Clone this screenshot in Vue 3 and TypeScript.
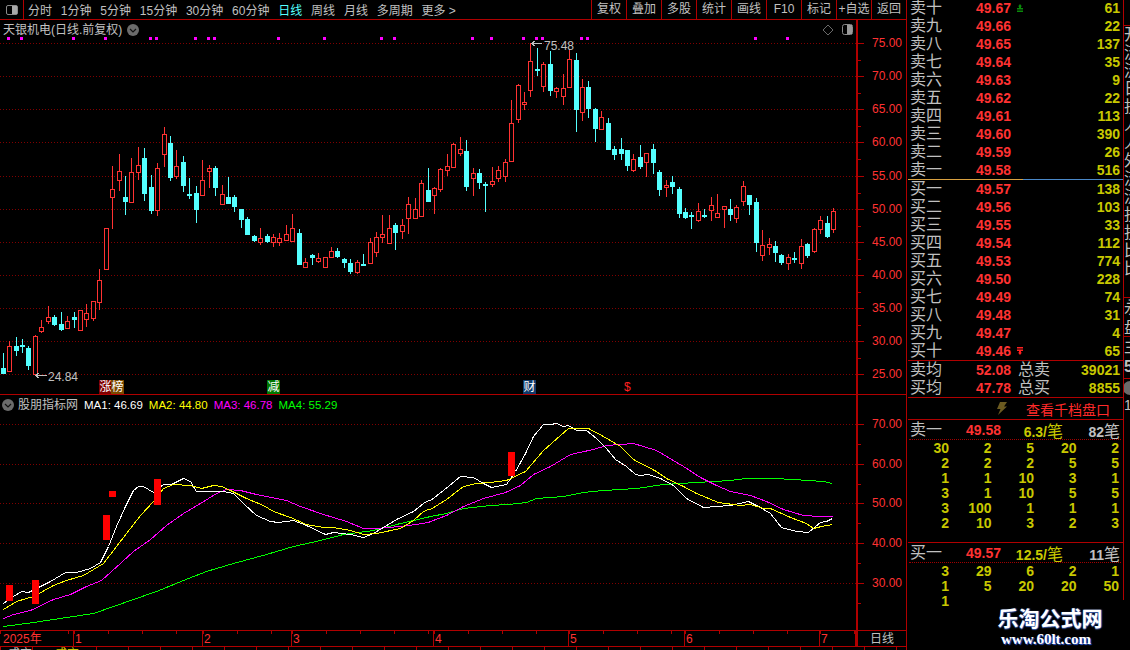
<template>
  <div class="app">
    <div class="left">
      <!-- 顶部周期工具栏 -->
      <div class="toolbar">
        <div class="toggle-cell">
          <svg width="14" height="12" viewBox="0 0 14 12">
            <rect x="1.5" y="1.5" width="11" height="9" rx="1.5" fill="none" stroke="#8a8a8a" />
            <rect x="7" y="2" width="5" height="8" fill="#a8a8a8" />
          </svg>
        </div>
        <div class="periods">
          <span v-for="p in periods" :key="p" class="period" :class="{ active: p === '日线' }">{{ p }}</span>
        </div>
        <div class="tools">
          <span v-for="t in tools" :key="t" class="tool">{{ t }}</span>
        </div>
      </div>

      <!-- K线主图 -->
      <div class="pane upper">
        <svg class="chart" width="906" height="374" viewBox="0 20 906 374">
          <line v-for="g in upperAxis" :key="g.y" class="grid" x1="0" x2="856" :y1="g.y + 0.5" :y2="g.y + 0.5" />
          <rect v-for="x in signalDots" :key="x" :x="x" y="37" width="3" height="3" fill="#ff00ff" />

          <g v-for="(c, i) in candles" :key="i">
            <rect :x="c.x" :y="c.wickTop" width="1" :height="c.wickH" :fill="c.up ? '#ff3232' : '#54ffff'" />
            <rect v-if="c.up" :x="c.x - 1.5" :y="c.top + 0.5" width="4" :height="c.h - 1" fill="#000" stroke="#ff3232" />
            <rect v-else :x="c.x - 2" :y="c.top" width="5" :height="c.h" fill="#54ffff" />
          </g>

          <!-- 最高最低价标注 -->
          <path class="mark" d="M531.5 43.5H542M531.5 43.5l4-3M531.5 43.5l4 3" />
          <text class="mark-text" x="544" y="50">75.48</text>
          <path class="mark" d="M35.5 375.5H47M35.5 375.5l4-3M35.5 375.5l4 3" />
          <text class="mark-text" x="48" y="381">24.84</text>

          <g v-for="t in tags" :key="t.x">
            <rect :x="t.x" y="380" width="13" height="14" :fill="t.bg" />
            <text class="tag-text" :x="t.x + 0.5" y="391">{{ t.text }}</text>
          </g>
          <text class="tag-sign" x="624" y="391">$</text>

          <rect x="856" y="20" width="2" height="374" fill="#b00000" />
          <g v-for="g in upperAxis" :key="'a' + g.y">
            <line class="tick" x1="858" x2="864" :y1="g.y + 0.5" :y2="g.y + 0.5" />
            <text class="axis-text" x="902" :y="g.y + 4">{{ g.label }}</text>
          </g>
          <line v-for="y in upperMinor" :key="y" class="tick" x1="858" x2="861" :y1="y" :y2="y" />

          <path d="M828 25l5 5-5 5-5-5z" fill="none" stroke="#6a6a6a" />
          <rect x="842.5" y="24.500" width="10" height="10" rx="2" fill="none" stroke="#8a8a8a" />
          <rect x="847" y="25" width="5" height="9" fill="#9a9a9a" />
        </svg>
        <div class="pane-title">
          <span>天银机电(日线.前复权)</span>
          <svg width="12" height="12" viewBox="0 0 12 12">
            <circle cx="6" cy="6" r="6" fill="#6b6b6b" />
            <path d="M3 5l3 3 3-3" fill="none" stroke="#111" stroke-width="1.2" />
          </svg>
        </div>
      </div>

      <!-- 副图指标 -->
      <div class="pane lower">
        <svg class="chart" width="906" height="235" viewBox="0 395 906 235">
          <line v-for="g in lowerAxis" :key="g.y" class="grid" x1="0" x2="856" :y1="g.y + 0.5" :y2="g.y + 0.5" />
          <polyline v-for="l in maLines" :key="l.color" class="ma" :points="l.points" :stroke="l.color" />
          <rect v-for="(b, i) in redBars" :key="i" :x="b[0]" :y="b[1]" :width="b[2]" :height="b[3]" fill="#ff0000" />

          <rect x="856" y="395" width="2" height="235" fill="#b00000" />
          <g v-for="g in lowerAxis" :key="'a' + g.y">
            <line class="tick" x1="858" x2="864" :y1="g.y + 0.5" :y2="g.y + 0.5" />
            <text class="axis-text" x="902" :y="g.y + 4">{{ g.label }}</text>
          </g>
          <line v-for="y in lowerMinor" :key="y" class="tick" x1="858" x2="861" :y1="y" :y2="y" />
        </svg>
        <div class="pane-title legend">
          <svg width="12" height="12" viewBox="0 0 12 12">
            <circle cx="6" cy="6" r="6" fill="#6b6b6b" />
            <path d="M3 5l3 3 3-3" fill="none" stroke="#111" stroke-width="1.2" />
          </svg>
          <span class="legend-name">股朋指标网</span>
          <span v-for="m in legend" :key="m.text" class="legend-item" :style="{ color: m.color }">{{ m.text }}</span>
        </div>
      </div>

      <!-- 时间轴 -->
      <div class="time-axis">
        <div class="months">
          <span v-for="m in months" :key="m.label" class="month" :style="{ width: m.width + 'px' }">{{ m.label }}</span>
        </div>
        <div class="axis-name">日线</div>
      </div>
      <div class="strip">
        <span style="width: 47px">成交</span>
        <span class="yellow" style="width: 38px">成交</span>
        <span class="yellow" style="width: 22px">一</span>
        <span>一</span>
      </div>
    </div>

    <!-- 右侧盘口 -->
    <div class="panel">
      <div class="book sell">
        <div v-for="r in sellRows" :key="r.label" class="book-row">
          <span class="label">{{ r.label }}</span>
          <span class="price">{{ r.price }}</span>
          <svg v-if="r.flag === 'up'" class="flag" width="8" height="8" viewBox="0 0 8 8">
            <path d="M4 0l2 2.500H5V4h2v1.500H1V4h2V2.500H2zM1 6.500h6V8H1z" fill="#0a8a0a" />
          </svg>
          <span class="vol">{{ r.vol }}</span>
        </div>
      </div>
      <div class="book-split"></div>
      <div class="book buy">
        <div v-for="r in buyRows" :key="r.label" class="book-row">
          <span class="label">{{ r.label }}</span>
          <span class="price">{{ r.price }}</span>
          <svg v-if="r.flag === 'down'" class="flag" width="8" height="8" viewBox="0 0 8 8">
            <path d="M1 0h6v1.500H1zM1 2.500h6V4H5v1.500h1L4 8 2 5.500h1V4H1z" fill="#ff2020" />
          </svg>
          <span class="vol">{{ r.vol }}</span>
        </div>
      </div>
      <div class="totals">
        <div class="total-row">
          <span class="label">卖均</span><span class="price">52.08</span>
          <span class="label total-name">总卖</span><span class="vol">39021</span>
        </div>
        <div class="total-row">
          <span class="label">买均</span><span class="price">47.78</span>
          <span class="label total-name">总买</span><span class="vol">8855</span>
        </div>
      </div>
      <div class="level-btn">
        <svg width="12" height="13" viewBox="0 0 12 13">
          <path d="M4 0h7L8 4.500h3L2 13l2.500-6H1z" fill="#6b5a20" />
        </svg>
        <span>查看千档盘口</span>
      </div>

      <div class="ticks-block first">
        <div class="tick-head">
          <span class="label">卖一</span><span class="price">49.58</span>
          <span class="per">6.3/<i>笔</i></span><span class="count">82<i>笔</i></span>
        </div>
        <div class="tick-grid">
          <span v-for="(n, i) in sellTicks" :key="i">{{ n }}</span>
        </div>
      </div>
      <div class="ticks-block last">
        <div class="tick-head">
          <span class="label">买一</span><span class="price">49.57</span>
          <span class="per">12.5/<i>笔</i></span><span class="count">11<i>笔</i></span>
        </div>
        <div class="tick-grid">
          <span v-for="(n, i) in buyTicks" :key="i">{{ n }}</span>
        </div>
      </div>
    </div>

    <!-- 最右被裁切的资讯栏 -->
    <div class="sliver">
      <div class="sliver-top"></div>
      <div class="sliver-news">
        <span v-for="(c, i) in newsChars" :key="i">{{ c }}</span>
      </div>
      <div class="sliver-block b1"><span>永</span><span>盘</span></div>
      <div class="sliver-block b2"><span>主</span><span class="num">5</span></div>
      <div class="sliver-block b3"><span class="dot"></span><span class="one">1</span></div>
    </div>

    <div class="watermark">
      <div class="wm-name">乐淘公式网</div>
      <div class="wm-url">www.60lt.com</div>
    </div>
  </div>
</template>

<script setup lang="ts">
import { computed } from 'vue'

type Row = [number, number, number, number, number, number]

// 蜡烛数据：[x, 实体上, 实体下, 影线上, 影线下, 是否阳线]，按 3 倍放大读数
const seg1: Row[] = [
  [10, 716, 730, 669, 732, 0], [28, 649, 725, 633, 725, 1], [49, 648, 663, 622, 678, 0],
  [67, 645, 647, 627, 668, 0], [85, 654, 708, 648, 720, 0], [106, 619, 735, 615, 735, 1],
  [124, 592, 606, 571, 608, 1], [145, 562, 575, 528, 582, 1], [163, 561, 585, 555, 588, 0],
  [184, 582, 600, 546, 603, 0], [202, 574, 596, 558, 597, 1], [223, 561, 570, 546, 594, 0],
  [241, 541, 602, 540, 602, 1], [259, 550, 568, 522, 590, 1], [280, 514, 567, 514, 573, 1],
  [298, 451, 517, 418, 540, 1], [319, 295, 418, 295, 418, 1], [337, 178, 203, 108, 296, 1],
  [358, 124, 152, 72, 183, 1], [376, 201, 216, 140, 254, 0], [394, 127, 218, 84, 218, 1],
  [415, 106, 128, 52, 150, 1], [433, 84, 191, 54, 212, 0], [454, 171, 243, 136, 251, 0],
  [472, 115, 242, 99, 257, 1], [493, 12, 74, -9, 110, 1], [511, 39, 143, 18, 152, 0],
  [529, 109, 140, 60, 146, 1], [550, 96, 167, 78, 185, 0], [568, 192, 197, 144, 206, 0],
  [589, 189, 239, 168, 278, 0], [607, 151, 197, 91, 197, 1], [628, 114, 124, 105, 174, 1],
  [646, 114, 173, 108, 197, 0], [667, 193, 223, 166, 223, 1], [685, 201, 221, 141, 221, 0],
  [703, 201, 231, 195, 245, 0], [724, 237, 269, 237, 293, 0], [742, 267, 314, 261, 315, 0],
  [763, 318, 332, 315, 335, 0], [781, 325, 337, 294, 344, 1], [802, 318, 336, 313, 339, 0],
  [820, 322, 338, 312, 350, 1], [838, 325, 338, 309, 347, 1], [859, 313, 331, 285, 333, 1],
  [877, 295, 335, 252, 335, 1]
]
const seg2: Row[] = [
  [28, 609, 705, 597, 705, 0], [46, 697, 712, 684, 714, 1], [67, 675, 683, 672, 705, 0],
  [85, 685, 695, 669, 699, 1], [106, 682, 712, 682, 713, 1], [124, 664, 682, 652, 683, 1],
  [142, 663, 681, 654, 684, 0], [163, 687, 698, 684, 714, 0], [181, 699, 725, 687, 732, 0],
  [202, 697, 728, 692, 731, 1], [220, 703, 705, 672, 708, 0], [241, 637, 701, 625, 701, 1],
  [259, 622, 668, 606, 681, 1], [277, 613, 623, 556, 639, 1], [298, 595, 641, 556, 641, 1],
  [316, 585, 608, 580, 660, 0], [337, 586, 605, 567, 627, 1], [355, 523, 566, 502, 612, 1],
  [376, 538, 566, 504, 566, 1], [394, 460, 560, 450, 560, 1], [415, 480, 516, 415, 516, 0],
  [433, 475, 497, 473, 552, 1], [451, 418, 478, 415, 485, 1], [472, 409, 422, 372, 438, 1],
  [490, 343, 413, 340, 413, 1], [511, 358, 371, 321, 378, 1], [529, 363, 470, 331, 483, 0],
  [550, 430, 445, 415, 498, 1], [568, 429, 458, 418, 477, 0], [586, 462, 465, 456, 546, 0],
  [607, 454, 464, 411, 471, 1], [625, 421, 446, 408, 456, 1], [646, 397, 440, 388, 456, 1],
  [664, 280, 394, 210, 394, 1], [685, 166, 269, 163, 279, 1], [703, 217, 223, 186, 240, 1],
  [721, 94, 182, 40, 201, 1], [742, 117, 122, 54, 138, 0], [760, 103, 170, 96, 186, 1],
  [781, 102, 182, 63, 198, 0], [799, 175, 185, 171, 204, 1], [820, 175, 200, 132, 225, 1],
  [838, 88, 173, 60, 173, 1], [859, 90, 239, 70, 305, 0], [877, 172, 248, 148, 273, 1],
  [895, 171, 236, 153, 264, 0]
]
const seg3: Row[] = [
  [76, 237, 296, 235, 336, 0], [94, 262, 299, 243, 299, 1], [115, 279, 359, 264, 359, 0],
  [133, 357, 374, 348, 390, 0], [154, 357, 371, 324, 390, 0], [172, 360, 407, 360, 423, 0],
  [190, 388, 422, 372, 425, 1], [211, 381, 410, 345, 417, 0], [229, 370, 398, 370, 441, 1],
  [250, 357, 399, 342, 432, 0], [268, 426, 480, 420, 498, 0], [289, 466, 472, 450, 501, 1],
  [307, 456, 471, 438, 492, 0], [328, 477, 551, 471, 564, 0], [346, 546, 563, 534, 567, 0],
  [364, 556, 560, 546, 597, 0], [385, 544, 572, 519, 576, 1], [403, 555, 558, 537, 564, 0],
  [424, 526, 542, 501, 573, 1], [442, 550, 563, 492, 563, 1], [463, 530, 539, 530, 594, 1],
  [481, 537, 555, 507, 573, 0], [499, 532, 566, 525, 579, 1], [520, 469, 515, 453, 528, 1],
  [538, 495, 525, 495, 555, 0], [559, 516, 639, 504, 666, 0], [577, 646, 677, 600, 693, 1],
  [598, 643, 653, 624, 675, 1], [616, 648, 668, 633, 696, 0], [634, 675, 698, 672, 705, 0],
  [655, 682, 701, 672, 720, 1], [673, 685, 688, 666, 699, 0], [694, 649, 701, 627, 717, 1],
  [712, 642, 678, 639, 684, 0], [733, 598, 665, 594, 669, 1], [751, 571, 599, 558, 612, 1],
  [772, 579, 621, 558, 624, 0], [790, 544, 598, 534, 609, 1]
]

function toCandles(rows: Row[], ox: number, oy: number) {
  return rows.map(([x, t, b, wt, wb, up]) => {
    const top = Math.floor(t / 3) + oy
    const bottom = Math.ceil(b / 3) + oy
    const wickTop = Math.floor(wt / 3) + oy
    return {
      x: Math.floor(x / 3) + ox,
      top,
      h: Math.max(bottom - top, 2),
      wickTop,
      wickH: Math.ceil(wb / 3) + oy - wickTop,
      up: up === 1
    }
  })
}

const candles = computed(() => [
  ...toCandles(seg1, 0, 130),
  ...toCandles(seg2, 290, 30),
  ...toCandles(seg3, 570, 30)
])

function axisRows(start: number, step: number, ys: number[]) {
  return ys.map((y, i) => ({ y, label: (start - i * step).toFixed(2) }))
}

const upperAxis = axisRows(75, 5, [43, 76, 109, 142, 176, 209, 242, 275, 308, 341, 374])
const lowerAxis = axisRows(70, 10, [424, 464, 503, 543, 583])
const upperMinor = upperAxis.slice(0, -1).map((g, i) => Math.round((g.y + upperAxis[i + 1].y) / 2) + 0.5)
const lowerMinor = [444.5, 484.5, 523.5, 563.5, 603.5]

const signalDots = [7, 20, 72, 104, 149, 155, 194, 207, 213, 277, 323, 380, 393, 471, 490, 522, 535, 541, 580, 586, 754, 786]

const tags = [
  { x: 99, text: '涨', bg: '#800000' },
  { x: 111, text: '榜', bg: '#7a4a00' },
  { x: 267, text: '减', bg: '#007800' },
  { x: 523, text: '财', bg: '#103a6a' }
]

const redBars = [
  [6, 585, 7, 16], [32, 580, 7, 24], [103, 515, 7, 25], [109, 491, 7, 6], [154, 479, 7, 26], [508, 452, 7, 24]
]

// 均线折点，左段与右段分开读数
function toPoints(left: number[][], right: number[][]) {
  const map = (list: number[][], ox: number) =>
    list.map(([x, y]) => `${Math.floor(x / 3 + ox) + 0.5},${Math.floor(y / 3 + 390) + 0.5}`)
  return [...map(left, 0), ...map(right, 430)].join(' ')
}

const maLines = [
  {
    color: '#00ff00',
    points: toPoints(
      [[10, 708], [100, 697], [200, 682], [280, 670], [340, 650], [400, 628], [470, 605], [550, 572], [620, 545], [700, 520], [800, 492], [880, 468], [960, 452], [1030, 433], [1120, 420], [1200, 400], [1280, 382]],
      [[0, 380], [50, 370], [100, 355], [180, 345], [235, 342], [290, 337], [320, 325], [400, 318], [460, 307], [520, 300], [620, 295], [700, 283], [800, 276], [900, 271], [950, 265], [1030, 265], [1090, 268], [1180, 274], [1208, 280]]
    )
  },
  {
    color: '#ff00ff',
    points: toPoints(
      [[10, 685], [40, 672], [90, 660], [160, 628], [210, 613], [260, 590], [305, 570], [365, 518], [400, 485], [450, 448], [500, 405], [550, 370], [600, 340], [650, 310], [680, 298], [720, 300], [770, 312], [860, 332], [900, 350], [970, 372], [1040, 395], [1090, 414], [1130, 414], [1200, 410], [1250, 403], [1285, 396]],
      [[0, 395], [50, 375], [100, 350], [160, 325], [225, 306], [270, 285], [310, 252], [360, 228], [420, 194], [490, 177], [530, 165], [610, 161], [680, 180], [760, 230], [810, 262], [860, 285], [900, 303], [960, 316], [1010, 335], [1060, 358], [1120, 375], [1170, 380], [1208, 380]]
    )
  },
  {
    color: '#ffffff',
    points: toPoints(
      [[10, 640], [40, 620], [65, 604], [85, 606], [110, 595], [150, 575], [195, 548], [230, 546], [270, 535], [300, 517], [325, 470], [350, 410], [375, 350], [400, 300], [415, 288], [430, 290], [460, 308], [490, 282], [515, 284], [550, 265], [570, 275], [590, 304], [670, 304], [700, 310], [730, 340], [770, 375], [810, 395], [835, 397], [880, 390], [920, 405], [975, 433], [1000, 427], [1050, 432], [1090, 441], [1120, 430], [1190, 388], [1240, 365], [1270, 340], [1285, 332]],
      [[0, 330], [40, 300], [90, 260], [130, 262], [160, 280], [185, 292], [230, 282], [255, 245], [285, 190], [310, 140], [340, 103], [360, 104], [380, 100], [400, 110], [415, 106], [440, 122], [470, 122], [500, 145], [530, 175], [555, 208], [590, 230], [615, 253], [630, 256], [655, 254], [690, 265], [730, 285], [770, 325], [820, 352], [860, 348], [900, 345], [955, 334], [985, 350], [1020, 370], [1055, 412], [1100, 425], [1135, 427], [1170, 398], [1190, 395], [1208, 385]]
    )
  },
  {
    color: '#ffff00',
    points: toPoints(
      [[10, 658], [50, 635], [100, 620], [160, 585], [200, 570], [250, 555], [310, 520], [340, 480], [380, 430], [420, 375], [460, 335], [490, 295], [520, 284], [570, 286], [605, 295], [640, 287], [665, 290], [690, 300], [740, 325], [790, 345], [820, 365], [870, 382], [920, 402], [970, 411], [1000, 412], [1050, 422], [1090, 434], [1130, 430], [1200, 415], [1240, 390], [1270, 365], [1285, 357]],
      [[0, 358], [50, 328], [100, 290], [140, 280], [180, 278], [230, 270], [285, 243], [340, 180], [415, 115], [475, 116], [520, 140], [570, 170], [610, 208], [680, 245], [710, 265], [760, 290], [800, 310], [865, 338], [930, 346], [960, 342], [1000, 354], [1020, 355], [1080, 382], [1130, 400], [1150, 414], [1175, 408], [1208, 403]]
    )
  }
]

const legend = [
  { text: 'MA1: 46.69', color: '#ffffff' },
  { text: 'MA2: 44.80', color: '#ffff00' },
  { text: 'MA3: 46.78', color: '#ff00ff' },
  { text: 'MA4: 55.29', color: '#00ff00' }
]

const periods = ['分时', '1分钟', '5分钟', '15分钟', '30分钟', '60分钟', '日线', '周线', '月线', '多周期', '更多 >']
const tools = ['复权', '叠加', '多股', '统计', '画线', 'F10', '标记', '+自选', '返回']

const months = [
  { label: '2025年', width: 74 },
  { label: '1', width: 129 },
  { label: '2', width: 89 },
  { label: '3', width: 142 },
  { label: '4', width: 135 },
  { label: '5', width: 116 },
  { label: '6', width: 135 },
  { label: '7', width: 36 }
]

const sellRows = [
  { label: '卖十', price: '49.67', vol: 61, flag: 'up' },
  { label: '卖九', price: '49.66', vol: 22 },
  { label: '卖八', price: '49.65', vol: 137 },
  { label: '卖七', price: '49.64', vol: 35 },
  { label: '卖六', price: '49.63', vol: 9 },
  { label: '卖五', price: '49.62', vol: 22 },
  { label: '卖四', price: '49.61', vol: 113 },
  { label: '卖三', price: '49.60', vol: 390 },
  { label: '卖二', price: '49.59', vol: 26 },
  { label: '卖一', price: '49.58', vol: 516 }
]
const buyRows = [
  { label: '买一', price: '49.57', vol: 138 },
  { label: '买二', price: '49.56', vol: 103 },
  { label: '买三', price: '49.55', vol: 33 },
  { label: '买四', price: '49.54', vol: 112 },
  { label: '买五', price: '49.53', vol: 774 },
  { label: '买六', price: '49.50', vol: 228 },
  { label: '买七', price: '49.49', vol: 74 },
  { label: '买八', price: '49.48', vol: 31 },
  { label: '买九', price: '49.47', vol: 4 },
  { label: '买十', price: '49.46', vol: 65, flag: 'down' }
]

const sellTicks = [30, 2, 5, 20, 2, 2, 2, 2, 5, 5, 1, 1, 10, 3, 1, 3, 1, 10, 5, 5, 3, 100, 1, 1, 1, 2, 10, 3, 2, 3]
const buyTicks = [3, 29, 6, 2, 1, 1, 5, 20, 20, 50, 1]

const newsChars = ['开', '流', '流', '日', '投', '人', '人', '外', '流', '流', '投', '投', '比', '比']
</script>

<style>
html,
body {
  margin: 0;
  background: #000;
}
</style>

<style scoped>
.app {
  position: relative;
  display: flex;
  width: 1130px;
  height: 650px;
  overflow: hidden;
  background: #000;
  color: #c0c0c0;
  font-family: "Liberation Sans", "Noto Sans CJK SC", sans-serif;
  font-size: 12px;
}

.left {
  display: flex;
  flex-direction: column;
  width: 906px;
  flex: none;
  border-right: 1px solid #b00000;
}

.toolbar {
  display: flex;
  align-items: center;
  height: 19px;
  border-bottom: 1px solid #b00000;
  flex: none;
}

.toggle-cell {
  display: flex;
  align-items: center;
  justify-content: center;
  width: 23px;
  height: 19px;
  border-right: 1px solid #b00000;
}

.periods {
  display: flex;
  gap: 8.800px;
  padding-left: 4px;
}

.period.active {
  color: #54ffff;
}

.tools {
  display: flex;
  margin-left: auto;
}

.tool {
  width: 34px;
  height: 19px;
  line-height: 19px;
  text-align: center;
  border-left: 1px solid #b00000;
}

.pane {
  position: relative;
  flex: none;
}

.upper {
  height: 374px;
  border-bottom: 1px solid #b00000;
}

.lower {
  height: 235px;
}

.chart {
  display: block;
}

.grid {
  stroke: #800000;
  stroke-width: 1;
  stroke-dasharray: 1 2;
  shape-rendering: crispEdges;
}

.tick {
  stroke: #b00000;
  shape-rendering: crispEdges;
}

.axis-text {
  fill: #ff3232;
  font-size: 12px;
  text-anchor: end;
}

.mark {
  fill: none;
  stroke: #c0c0c0;
  shape-rendering: crispEdges;
}

.mark-text {
  fill: #c0c0c0;
  font-size: 12px;
}

.tag-text {
  fill: #fff;
  font-size: 12px;
}

.tag-sign {
  fill: #ff2020;
  font-size: 12px;
}

.ma {
  fill: none;
  stroke-width: 1;
  shape-rendering: crispEdges;
}

.pane-title {
  position: absolute;
  top: 2px;
  left: 3px;
  display: flex;
  align-items: center;
  gap: 5px;
  line-height: 16px;
  white-space: nowrap;
}

.legend {
  left: 2px;
  gap: 6px;
}

.legend-name {
  margin-left: -2px;
}

.legend-item {
  font-size: 11.500px;
}

.time-axis {
  display: flex;
  height: 15px;
  flex: none;
  border-top: 1px solid #b00000;
  border-bottom: 1px solid #b00000;
  box-sizing: content-box;
}

.months {
  display: flex;
  width: 856px;
}

.month {
  box-sizing: border-box;
  padding-left: 1px;
  line-height: 16px;
  color: #ff3232;
  border-right: 1px solid #b00000;
  background: repeating-linear-gradient(to right, #b00000 0 1px, transparent 1px 34px) 0 0 / 100% 3px no-repeat;
}

.month:first-child {
  padding-left: 3px;
}

.axis-name {
  flex: 1;
  box-sizing: border-box;
  text-align: center;
  line-height: 16px;
  border-left: 2px solid #b00000;
}

.strip {
  display: flex;
  height: 3px;
  overflow: hidden;
  line-height: 14px;
  padding-left: 8px;
  background: repeating-linear-gradient(to right, #b00000 0 1px, transparent 1px 32px);
}

.strip span {
  display: block;
  height: 3px;
  overflow: hidden;
}

.strip .yellow {
  color: #c8c800;
}

.panel {
  display: flex;
  flex-direction: column;
  width: 217px;
  height: 600px;
  flex: none;
  box-sizing: border-box;
  border-right: 1px solid #b00000;
  padding-left: 1px;
}

.label {
  font-size: 16px;
  color: #c0c0c0;
  line-height: 18px;
}

.price {
  font-size: 14px;
  font-weight: 700;
  color: #ff3232;
}

.vol {
  margin-left: auto;
  font-size: 14px;
  font-weight: 700;
  color: #c8c800;
}

.book {
  display: flex;
  flex-direction: column;
  flex: none;
}

.sell {
  margin-top: -1px;
}

.book-row {
  display: flex;
  align-items: center;
  height: 18px;
  padding: 0 3px 0 2px;
}

.book-row .label {
  width: 66px;
}

.flag {
  margin-left: 5px;
}

.book-split {
  height: 1px;
  flex: none;
  background: linear-gradient(to right, #d8a040 0 115px, #4a88c8 115px);
}

.totals {
  flex: none;
  border-top: 1px solid #b00000;
  border-bottom: 1px solid #b00000;
  padding: 0 3px 0 2px;
}

.total-row {
  display: flex;
  align-items: center;
  height: 18px;
}

.total-row .label {
  width: 66px;
}

.total-row .total-name {
  width: auto;
  margin-left: 7px;
}

.level-btn {
  display: flex;
  align-items: center;
  flex: none;
  height: 21px;
  border-bottom: 1px solid #b00000;
  padding-left: 88px;
  gap: 18px;
  color: #ff2a2a;
  font-size: 14px;
}

.ticks-block {
  flex: none;
}

.ticks-block.first {
  height: 122px;
  border-bottom: 1px solid #b00000;
}

.ticks-block.last {
  flex: 1;
  min-height: 0;
}

.tick-head {
  display: flex;
  align-items: center;
  height: 19px;
  margin: 0 2px 0 1px;
  padding: 0 1px;
  border-bottom: 1px dotted #a00000;
}

.tick-head .label {
  width: 56px;
  flex: none;
}

.tick-head .price {
  width: 46px;
  flex: none;
}

.tick-head i {
  font-style: normal;
  font-size: 16px;
  font-weight: 400;
}

.per {
  width: 51px;
  flex: none;
  text-align: right;
  font-size: 14px;
  font-weight: 700;
  color: #c8c800;
  white-space: nowrap;
}

.count {
  margin-left: auto;
  font-size: 14px;
  font-weight: 700;
  color: #c0c0c0;
}

.tick-grid {
  display: grid;
  grid-template-columns: repeat(5, 42.500px);
  margin-left: -1.500px;
  padding-top: 1px;
  font-size: 14px;
  font-weight: 700;
  line-height: 15px;
  color: #c8c800;
  text-align: right;
}

.sliver {
  display: flex;
  flex-direction: column;
  flex: 1;
  overflow: hidden;
}

.sliver span {
  display: block;
  white-space: nowrap;
}

.sliver-top {
  height: 25px;
  border-bottom: 1px solid #b00000;
  flex: none;
}

.sliver-news {
  height: 271px;
  flex: none;
  border-bottom: 1px solid #b00000;
  font-size: 16px;
  line-height: 18px;
}

.sliver-block {
  flex: none;
  font-size: 16px;
  line-height: 20px;
  border-bottom: 1px solid #b00000;
}

.b1 {
  height: 38px;
}

.b2 {
  height: 41px;
}

.b3 {
  border-bottom: 0;
}

.sliver-block .num {
  font-weight: 700;
  color: #c0c0c0;
}

.dot {
  width: 14px;
  height: 14px;
  margin: 2px 0 0 -1px;
  border-radius: 50%;
  background: #6b6b6b;
}

.one {
  font-size: 14px;
}

/* 水印 */
.watermark {
  position: absolute;
  left: 994px;
  top: 607px;
  width: 112px;
  text-align: center;
  color: #fff;
}

.wm-name {
  font-size: 21px;
  font-weight: 700;
  line-height: 24px;
  text-shadow: 0 1px 1px #3a5aa8, 1px 0 1px #3a5aa8;
}

.wm-url {
  font-family: "Liberation Serif", serif;
  font-size: 15px;
  font-weight: 700;
  line-height: 16px;
  text-shadow: 1px 1px 1px #2a5ad8;
  margin-left: -8px;
}
</style>
